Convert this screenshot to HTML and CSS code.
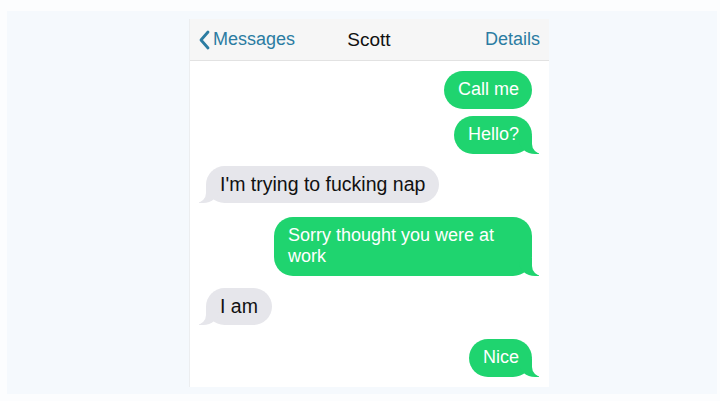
FILE: index.html
```html
<!DOCTYPE html>
<html>
<head>
<meta charset="utf-8">
<link rel="stylesheet" href="styles.css">
</head>
<body>
<div class="frame">
  <div class="phone">
    <div class="nav">
      <div class="back">
        <svg class="chev" width="12" height="20" viewBox="0 0 12 20"><path d="M10 2 L3 10 L10 18" fill="none" stroke="#2b7ca2" stroke-width="2.8" stroke-linecap="round" stroke-linejoin="round"/></svg>
        <span>Messages</span>
      </div>
      <div class="title">Scott</div>
      <div class="details">Details</div>
    </div>
    <div class="thread">
      <div class="msg sent g1">Call me</div>
      <div class="msg sent tail g2">Hello?</div>
      <div class="msg recv tail g3">I'm trying to fucking nap</div>
      <div class="msg sent tail wide g4">Sorry thought you were at work</div>
      <div class="msg recv tail g3">I am</div>
      <div class="msg sent tail g4">Nice</div>
    </div>
  </div>
</div>
</body>
</html>
```
FILE: styles.css
```css
html, body { margin: 0; padding: 0; }
body {
  background: #fcfdfe;
  padding: 11px 3px 7px 7px;
  font-family: "Liberation Sans", Arial, sans-serif;
}
.frame {
  background: #f5f9fd;
  height: 383px;
  padding: 8px 0 0 182px;
  box-sizing: border-box;
}
.phone {
  width: 359px;
  background: #ffffff;
  border-left: 1px solid #eceef0;
}
.nav {
  height: 41px;
  background: #f6f6f6;
  border-bottom: 1px solid #e2e2e2;
  display: flex;
  align-items: center;
  justify-content: space-between;
  padding: 0 9px 0 8px;
  font-size: 18px;
}
.back {
  display: flex;
  align-items: center;
  color: #2b7ca2;
  width: 120px;
}
.chev { margin-right: 3px; }
.title { color: #111; font-size: 19px; }
.details { color: #2b7ca2; width: 120px; text-align: right; }
.thread {
  height: 326px;
  display: flex;
  flex-direction: column;
  padding: 10px 17px 0 16px;
  box-sizing: border-box;
  overflow: hidden;
}
.msg {
  position: relative;
  font-size: 18px;
  line-height: 21px;
  padding: 8px 13px 9px 14px;
  border-radius: 19px;
  max-width: 258px;
  box-sizing: border-box;
}
.sent {
  align-self: flex-end;
  background: #1fd46f;
  color: #ffffff;
}
.recv {
  align-self: flex-start;
  background: #e6e6eb;
  color: #111111;
  font-size: 19.5px;
  padding: 8px 14px 8px 14px;
}
.wide { width: 258px; }
.g1 { margin-bottom: 7px; }
.g2 { margin-bottom: 12px; }
.g3 { margin-bottom: 14px; }
.g4 { margin-bottom: 12px; }
.tail::before, .tail::after {
  content: "";
  position: absolute;
  bottom: 0;
  height: 18px;
}
.sent.tail::before {
  right: -7px;
  width: 20px;
  background: #1fd46f;
  border-bottom-left-radius: 16px 14px;
}
.sent.tail::after {
  right: -26px;
  width: 26px;
  background: #ffffff;
  border-bottom-left-radius: 10px;
}
.recv.tail::before {
  left: -7px;
  width: 20px;
  background: #e6e6eb;
  border-bottom-right-radius: 16px 14px;
}
.recv.tail::after {
  left: -26px;
  width: 26px;
  background: #ffffff;
  border-bottom-right-radius: 10px;
}
```
